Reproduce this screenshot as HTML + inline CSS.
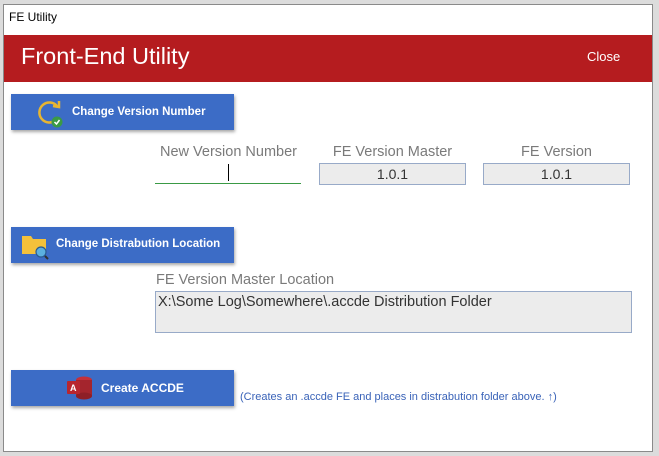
<!DOCTYPE html>
<html><head><meta charset="utf-8"><style>
*{margin:0;padding:0;box-sizing:border-box}
body{width:659px;height:456px;background:#dcdcdc;font-family:"Liberation Sans",sans-serif;position:relative;overflow:hidden}
.win{position:absolute;left:3px;top:4px;width:650px;height:448px;background:#fff;border:1px solid #8a8a8a}
.a{position:absolute;white-space:nowrap}
.title{left:9px;top:10px;font-size:12px;color:#000}
.band{left:4px;top:35px;width:648px;height:47px;background:#b51c1f}
.btn{position:absolute;left:11px;width:223px;height:36px;background:#3c6cc6;box-shadow:1px 2px 3px rgba(0,0,0,.35);color:#fff;font-weight:bold;font-size:11.5px;font-family:"Liberation Sans",sans-serif;white-space:nowrap}
.lbl{font-size:14.5px;color:#7a7a7a;text-align:center}
.box{background:#ececec;border:1px solid #98aac8;font-size:14px;color:#333;text-align:center}
</style></head><body>
<div class="win"></div>
<div class="a title">FE Utility</div>
<div class="a band"></div>
<div class="a" style="left:21px;top:43px;font-size:23.5px;color:#fff">Front-End Utility</div>
<div class="a" style="left:587px;top:49px;font-size:13px;color:#fff">Close</div>

<div class="btn" style="top:94px">
<svg class="a" style="left:24px;top:4px" width="30" height="30" viewBox="0 0 30 30"><path d="M22 8 A10 10 0 1 0 21 22" fill="none" stroke="#e8b531" stroke-width="2.5"/><path d="M18 8 L24 9 L24 3" fill="none" stroke="#e8b531" stroke-width="2.5"/><circle cx="22" cy="24" r="5.5" fill="#3a9a45"/><path d="M19.5 24 L21.5 26 L24.5 22" stroke="#fff" stroke-width="1.5" fill="none"/></svg>
<span class="a" style="left:61px;top:12px">Change Version Number</span></div>

<div class="a lbl" style="left:152px;top:144px;width:153px">New Version Number</div>
<div class="a" style="left:155px;top:183px;width:146px;height:1px;background:#3a9a45"></div>
<div class="a" style="left:228px;top:164px;width:1px;height:17px;background:#000"></div>
<div class="a lbl" style="left:319px;top:144px;width:147px">FE Version Master</div>
<div class="a box" style="left:319px;top:163px;width:147px;height:22px;line-height:20px">1.0.1</div>
<div class="a lbl" style="left:483px;top:144px;width:147px">FE Version</div>
<div class="a box" style="left:483px;top:163px;width:147px;height:22px;line-height:20px">1.0.1</div>

<div class="btn" style="top:227px">
<svg class="a" style="left:10px;top:5px" width="30" height="28" viewBox="0 0 30 28"><path d="M1 4 H10 L12 7 H25 V22 H1 Z" fill="#f4c13b"/><circle cx="20" cy="20" r="5" fill="#5bb0e0" stroke="#2a5a90" stroke-width="1.2"/><path d="M24 24 L27 27" stroke="#333" stroke-width="2"/></svg>
<span class="a" style="left:45px;top:11px">Change Distrabution Location</span></div>

<div class="a lbl" style="left:156px;top:272px">FE Version Master Location</div>
<div class="a box" style="left:155px;top:291px;width:477px;height:42px;text-align:left;padding:2px 0 0 2px;font-size:14.5px">X:\Some Log\Somewhere\.accde Distribution Folder</div>

<div class="btn" style="top:370px">
<svg class="a" style="left:55px;top:5px" width="28" height="26" viewBox="0 0 28 26"><ellipse cx="18" cy="5" rx="8" ry="3.5" fill="#c4303a"/><rect x="10" y="5" width="16" height="16" fill="#a4252d"/><ellipse cx="18" cy="21" rx="8" ry="3.5" fill="#8e1f27"/><rect x="1" y="6" width="13" height="13" rx="1" fill="#b8262f"/><text x="4" y="16" font-size="9" fill="#fff" font-family="Liberation Sans" font-weight="bold">A</text></svg>
<span class="a" style="left:90px;top:11px;font-size:12px">Create ACCDE</span></div>
<div class="a" style="left:240px;top:391px;font-size:11px;color:#3a63b8">(Creates an .accde FE and places in distrabution folder above. ↑)</div>
</body></html>
